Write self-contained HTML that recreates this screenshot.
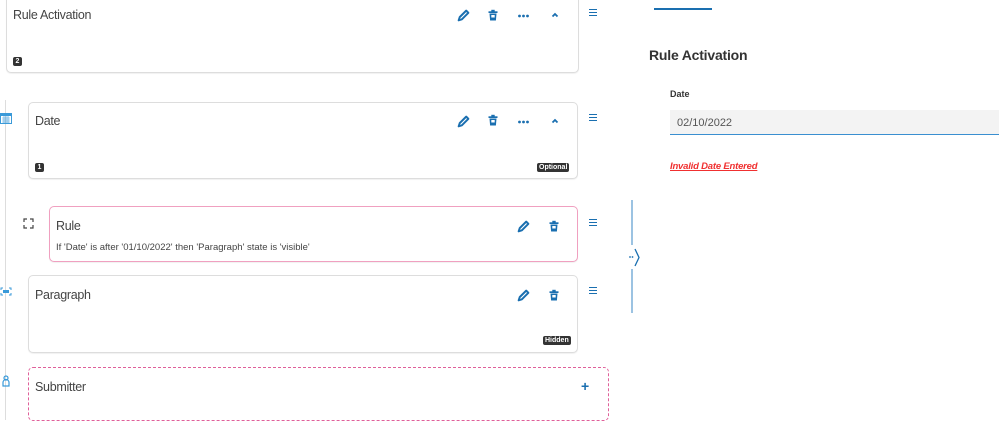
<!DOCTYPE html>
<html><head><meta charset="utf-8"><style>
body{margin:0;width:999px;height:448px;background:#fff;position:relative;overflow:hidden;font-family:"Liberation Sans",sans-serif;color:#444}
.a{position:absolute}
.card{position:absolute;border:1px solid #ddd;border-radius:5px;background:#fff;box-sizing:border-box;box-shadow:0 1px 1px rgba(0,0,0,.06)}
.t{position:absolute;font-size:12.5px;letter-spacing:-0.3px;color:#444}
.bd{position:absolute;background:#333;color:#fff;font-size:7px;font-weight:bold;border-radius:2px;padding:0 2px;line-height:9px;min-width:5px;text-align:center}
.hb{position:absolute;width:8px;height:7px;border-top:1.5px solid #1a6fb0;border-bottom:1.5px solid #1a6fb0;box-sizing:border-box}
.hb:after{content:"";position:absolute;left:0;right:0;top:1.5px;border-top:1.5px solid #1a6fb0}
</style></head><body>
<svg width="0" height="0" style="position:absolute"><defs>
<symbol id="pen" viewBox="0 0 12 12"><path d="M1.5 10.5 L2.5 7.5 L8.5 1.5 L10.5 3.5 L4.5 9.5 Z" fill="none" stroke="#1a6fb0" stroke-width="1.8" stroke-linejoin="round"/></symbol>
<symbol id="trash" viewBox="0 0 12 12"><rect x="1.5" y="2.3" width="9" height="1.7" fill="#1a6fb0"/><rect x="4.3" y="0.8" width="3.4" height="1.7" fill="#1a6fb0"/><path d="M2.5 4.5 h7 l-0.6 7 h-5.8z" fill="#1a6fb0"/><rect x="4.3" y="6" width="3.4" height="2.5" fill="#fff"/></symbol>
<symbol id="dots" viewBox="0 0 12 4"><circle cx="2" cy="2" r="1.4" fill="#1a6fb0"/><circle cx="6" cy="2" r="1.4" fill="#1a6fb0"/><circle cx="10" cy="2" r="1.4" fill="#1a6fb0"/></symbol>
<symbol id="car" viewBox="0 0 8 6"><path d="M1.5 4.5 L4 2 L6.5 4.5" fill="none" stroke="#1a6fb0" stroke-width="1.8"/></symbol>
</defs></svg>

<div class="a" style="left:5px;top:100px;width:1px;height:320px;background:#ddd"></div>

<div class="card" style="left:6px;top:-6px;width:573px;height:79px"></div>
<div class="t" style="left:13px;top:8px">Rule Activation</div>
<div class="bd" style="left:13px;top:57px">2</div>
<svg class="a" style="left:457px;top:9px" width="13" height="13"><use href="#pen"/></svg>
<svg class="a" style="left:487px;top:9px" width="12" height="12"><use href="#trash"/></svg>
<svg class="a" style="left:517px;top:14px" width="13" height="4"><use href="#dots"/></svg>
<svg class="a" style="left:551px;top:12px" width="8" height="6"><use href="#car"/></svg>
<div class="hb" style="left:589px;top:9px"></div>

<svg class="a" style="left:0px;top:112px" width="12" height="12"><rect x="0.5" y="1.5" width="11" height="10" fill="none" stroke="#3a9ad9"/><rect x="0.5" y="1.5" width="11" height="2.5" fill="#3a9ad9"/><path d="M2 6h8M2 8h8M2 10h8M4 4v7M6 4v7M8 4v7" stroke="#3a9ad9" stroke-width=".6"/></svg>
<div class="card" style="left:28px;top:102px;width:550px;height:77px"></div>
<div class="t" style="left:35px;top:114px">Date</div>
<div class="bd" style="left:35px;top:163px">1</div>
<div class="bd" style="left:537px;top:163px">Optional</div>
<svg class="a" style="left:457px;top:115px" width="13" height="13"><use href="#pen"/></svg>
<svg class="a" style="left:487px;top:114px" width="12" height="12"><use href="#trash"/></svg>
<svg class="a" style="left:517px;top:120px" width="13" height="4"><use href="#dots"/></svg>
<svg class="a" style="left:551px;top:118px" width="8" height="6"><use href="#car"/></svg>
<div class="hb" style="left:589px;top:114px"></div>

<svg class="a" style="left:23px;top:218px" width="11" height="11"><path d="M1 4V1h3M7 1h3v3M10 7v3H7M4 10H1V7" fill="none" stroke="#444" stroke-width="1.2"/></svg>
<div class="card" style="left:49px;top:206px;width:529px;height:56px;border-color:#f0a0c0"></div>
<div class="t" style="left:56px;top:219px">Rule</div>
<div class="a" style="left:56px;top:242px;font-size:9.5px;color:#444">If 'Date' is after '01/10/2022' then 'Paragraph' state is 'visible'</div>
<svg class="a" style="left:517px;top:220px" width="13" height="13"><use href="#pen"/></svg>
<svg class="a" style="left:548px;top:220px" width="12" height="12"><use href="#trash"/></svg>
<div class="hb" style="left:589px;top:219px"></div>

<svg class="a" style="left:0px;top:287px" width="12" height="9"><path d="M1 3V1h2M9 1h2v2M11 6v2H9M3 8H1V6" fill="none" stroke="#3a9ad9"/><rect x="3" y="3" width="6" height="3" fill="#3a9ad9"/></svg>
<div class="card" style="left:28px;top:275px;width:550px;height:78px"></div>
<div class="t" style="left:35px;top:288px">Paragraph</div>
<div class="bd" style="left:543px;top:336px">Hidden</div>
<svg class="a" style="left:517px;top:289px" width="13" height="13"><use href="#pen"/></svg>
<svg class="a" style="left:548px;top:289px" width="12" height="12"><use href="#trash"/></svg>
<div class="hb" style="left:589px;top:287px"></div>

<svg class="a" style="left:2px;top:375px" width="8" height="12"><circle cx="4" cy="3" r="2" fill="none" stroke="#3a9ad9" stroke-width="1.2"/><path d="M1 11V7.5a3 3 0 0 1 6 0V11z" fill="none" stroke="#3a9ad9" stroke-width="1.2"/></svg>
<div class="a" style="left:28px;top:367px;width:581px;height:54px;border:1px dashed #e0609a;border-radius:5px;box-sizing:border-box"></div>
<div class="t" style="left:35px;top:380px">Submitter</div>
<div class="a" style="left:581px;top:378px;font-size:14px;font-weight:bold;color:#1a6fb0">+</div>

<div class="a" style="left:631px;top:200px;width:2px;height:113px;background:#9cc3e2"></div>
<div class="a" style="left:628px;top:245px;width:12px;height:24px;background:#fff"></div>
<svg class="a" style="left:628px;top:248px" width="14" height="20"><circle cx="2" cy="9" r="0.9" fill="#1a6fb0"/><circle cx="4.5" cy="9" r="0.9" fill="#1a6fb0"/><path d="M7 1 L11 9.5 L7 18" fill="none" stroke="#1a6fb0" stroke-width="1.3"/></svg>

<div class="a" style="left:654px;top:8px;width:58px;height:2px;background:#1a6fb0"></div>
<div class="a" style="left:649px;top:47px;font-size:14px;font-weight:bold;color:#333;letter-spacing:-0.2px">Rule Activation</div>
<div class="a" style="left:670px;top:89px;font-size:9px;font-weight:bold;color:#333">Date</div>
<div class="a" style="left:670px;top:110px;width:329px;height:25px;background:#f3f3f3;border-bottom:1.5px solid #3a8fd0;box-sizing:border-box"></div>
<div class="a" style="left:677px;top:117px;font-size:11px;color:#555">02/10/2022</div>
<div class="a" style="left:670px;top:161px;font-size:9.5px;font-weight:bold;font-style:italic;text-decoration:underline;color:#f03030;letter-spacing:-0.2px">Invalid Date Entered</div>
</body></html>
